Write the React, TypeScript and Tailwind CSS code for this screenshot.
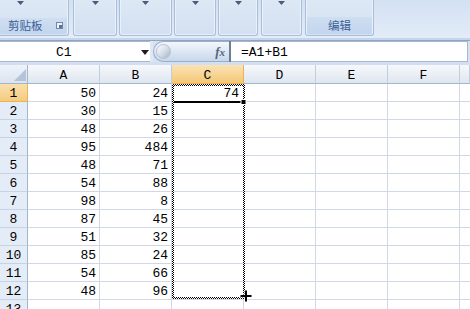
import React from "react";

const A = [50, 30, 48, 95, 48, 54, 98, 87, 51, 85, 54, 48];
const B = [24, 15, 26, 484, 71, 88, 8, 45, 32, 24, 66, 96];

function Arrow() {
  return (
    <svg width="7" height="4" viewBox="0 0 7 4" className="block">
      <path d="M0 0 H7 L3.5 4 Z" fill="#4a5d78" />
    </svg>
  );
}

function CollapsedGroup({ w }: { w: string }) {
  return (
    <div
      className={`${w} h-[36px] shrink-0 rounded-b-[3px] border border-t-0 border-[#a9bed8] bg-gradient-to-b from-[#dde8f5] to-[#d2e0f1] shadow-[inset_1px_0_0_#eaf1fa,inset_-1px_0_0_#eaf1fa,inset_0_-1px_0_#e6eef9] flex justify-center`}
    >
      <div className="pt-[1px]">
        <Arrow />
      </div>
    </div>
  );
}

export default function App() {
  const headerCols = ["A", "B", "C", "D", "E", "F", ""];
  return (
    <div className="w-[470px] h-[309px] overflow-hidden relative bg-white font-['Liberation_Mono',monospace] text-[13px] text-black leading-none">
      {/* Ribbon */}
      <div className="h-[38px] flex items-start bg-gradient-to-b from-[#d3e1f2] to-[#e3ecf8]">
        {/* Clipboard group */}
        <div className="w-[70px] ml-[-1px] h-[36px] shrink-0 rounded-br-[3px] border border-t-0 border-l-0 border-[#a9bed8] bg-gradient-to-b from-[#dde8f5] to-[#d4e1f2] flex flex-col shadow-[inset_-1px_0_0_#eaf1fa]">
          <div className="h-[18px] flex justify-center pr-[26px] pt-[1px]">
            <Arrow />
          </div>
          <div className="flex-1 mx-[1px] mb-[1px] rounded-b-[2px] bg-gradient-to-b from-[#cfdef1] to-[#c3d6ee] flex items-center pl-[8px] pr-[3px]">
            <span className="font-['Noto_Sans_CJK_SC',sans-serif] text-[11.5px] text-[#3d6196] tracking-[0px]">剪贴板</span>
            <div className="ml-auto mr-[1px] mt-[-2px] w-[7px] h-[7px] border border-[#6f87a8] bg-[#eef3fa] relative">
              <div className="absolute right-[0px] bottom-[0px] w-[3px] h-[3px] bg-[#5a7397]" />
            </div>
          </div>
        </div>
        <div className="w-[4px] shrink-0" />
        <CollapsedGroup w="w-[44px]" />
        <div className="w-[2px] shrink-0" />
        <CollapsedGroup w="w-[53px]" />
        <div className="w-[2px] shrink-0" />
        <CollapsedGroup w="w-[42px]" />
        <div className="w-[2px] shrink-0" />
        <CollapsedGroup w="w-[40px]" />
        <div className="w-[3px] shrink-0" />
        <CollapsedGroup w="w-[41px]" />
        <div className="w-[3px] shrink-0" />
        {/* Edit group */}
        <div className="w-[69px] h-[36px] shrink-0 rounded-b-[3px] border border-t-0 border-[#a9bed8] bg-gradient-to-b from-[#dde8f5] to-[#d4e1f2] flex flex-col shadow-[inset_1px_0_0_#eaf1fa,inset_-1px_0_0_#eaf1fa]">
          <div className="h-[17px]" />
          <div className="flex-1 mx-[1px] mb-[1px] rounded-b-[2px] bg-gradient-to-b from-[#cfdef1] to-[#c3d6ee] flex items-center justify-center">
            <span className="font-['Noto_Sans_CJK_SC',sans-serif] text-[11.5px] text-[#3d6196]">编辑</span>
          </div>
        </div>
      </div>
      {/* Separator */}
      <div className="h-[3px] bg-[#c6d6ea] border-b border-[#8ea6c4]" />
      {/* Formula bar */}
      <div className="h-[21px] flex bg-[#d6e2f0]">
        <div className="w-[150px] h-full bg-white border-y border-[#a7b8cd] flex items-center relative">
          <span className="absolute left-[56px] top-[4px]">C1</span>
          <div className="absolute left-[141px] top-[8px]">
            <svg width="8" height="5" viewBox="0 0 8 5">
              <path d="M0 0 H8 L4 5 Z" fill="#1d1d1d" />
            </svg>
          </div>
        </div>
        <div className="w-[3px] h-full bg-[#dfe8f3]" />
        <div className="w-[76px] h-full rounded-l-full bg-gradient-to-b from-[#f4f7fc] via-[#dde7f4] to-[#c7d7ec] border border-r-0 border-[#98aecb] flex items-center relative">
          <div className="absolute left-[2px] top-[2px] w-[15px] h-[15px] rounded-full bg-gradient-to-br from-[#ffffff] via-[#d7dee9] to-[#a3b2c6] border border-[#b3c2d5]" />
          <span className="absolute right-[4px] top-[3px] font-['Liberation_Serif',serif] italic font-bold text-[13px] text-[#56647a]">
            f<span className="text-[11px]">x</span>
          </span>
        </div>
        <div className="w-[2px] h-full bg-[#6e7f95]" />
        <div className="w-[237px] h-full bg-white border-y border-r border-[#a7b8cd] flex items-center pl-[10px]">
          <span className="mt-[1px]">=A1+B1</span>
        </div>
        <div className="flex-1 bg-[#d6e2f0]" />
      </div>
      <div className="h-[3px] bg-[#d3dfee]" />
      {/* Grid */}
      <div className="relative">
        <div className="grid grid-cols-[28px_repeat(6,72px)_1fr] grid-rows-[19px_repeat(13,18px)]">
          {/* corner */}
          <div className="relative bg-gradient-to-b from-[#eef3fa] to-[#dbe4f0] border-r border-b border-[#9eb6ce]">
            <svg className="absolute right-[1px] bottom-[2px]" width="12" height="12" viewBox="0 0 12 12">
              <path d="M12 0 V12 H0 Z" fill="#b4c3d6" />
            </svg>
          </div>
          {headerCols.map((c, i) => (
            <div
              key={"h" + i}
              className={
                c === "C"
                  ? "bg-gradient-to-b from-[#fae3b5] to-[#f4c776] border-r border-b border-[#f0b24c] flex items-center justify-center pt-[2px]"
                  : "bg-gradient-to-b from-[#f6f8fc] to-[#dfe6ef] border-r border-b border-[#c0cfdf] border-b-[#9eb6ce] flex items-center justify-center pt-[2px]"
              }
            >
              {c}
            </div>
          ))}
          {Array.from({ length: 13 }).map((_, r) => (
            <React.Fragment key={"r" + r}>
              <div
                className={
                  r === 0
                    ? "bg-gradient-to-b from-[#fae0ae] to-[#f5cb7e] border-r border-b border-[#f0b24c] flex items-center justify-center pt-[1px]"
                    : "bg-[#e4ecf7] border-r border-b border-[#c5d3e4] border-r-[#9eb6ce] flex items-center justify-center pt-[1px]"
                }
              >
                {r + 1}
              </div>
              <div className="border-r border-b border-[#d0d7e5] flex items-center justify-end pr-[3px] pt-[1px]">
                {r < 12 ? A[r] : ""}
              </div>
              <div className="border-r border-b border-[#d0d7e5] flex items-center justify-end pr-[3px] pt-[1px]">
                {r < 12 ? B[r] : ""}
              </div>
              <div className="border-r border-b border-[#d0d7e5] flex items-center justify-end pr-[4px] pt-[1px]">
                {r === 0 ? 74 : ""}
              </div>
              <div className="border-r border-b border-[#d0d7e5]" />
              <div className="border-r border-b border-[#d0d7e5]" />
              <div className="border-r border-b border-[#d0d7e5]" />
              <div className="border-b border-[#d0d7e5]" />
            </React.Fragment>
          ))}
        </div>
        {/* Overlay: marching ants, active border, cursor */}
        <svg className="absolute left-0 top-0 pointer-events-none" width="470" height="244" viewBox="0 0 470 244">
          <defs>
            <pattern id="ants" width="2" height="2" patternUnits="userSpaceOnUse">
              <rect width="2" height="2" fill="#ffffff" />
              <rect x="0" y="0" width="1" height="1" fill="#000000" />
              <rect x="1" y="1" width="1" height="1" fill="#000000" />
            </pattern>
          </defs>
          <rect x="172" y="19" width="73" height="2" fill="url(#ants)" />
          <rect x="172" y="232" width="73" height="2" fill="url(#ants)" />
          <rect x="172" y="19" width="2" height="215" fill="url(#ants)" />
          <rect x="243" y="19" width="2" height="215" fill="url(#ants)" />
          <rect x="174" y="36" width="68" height="2" fill="#000000" />
          <rect x="241" y="34.5" width="5" height="5" fill="#000000" stroke="#ffffff" strokeWidth="1" />
          <g>
            <rect x="240" y="229.5" width="12" height="3" fill="#ffffff" />
            <rect x="244.5" y="225" width="3" height="12" fill="#ffffff" />
            <rect x="240.5" y="230" width="11" height="2" fill="#000000" />
            <rect x="245" y="225.5" width="2" height="11" fill="#000000" />
          </g>
        </svg>
      </div>
    </div>
  );
}
